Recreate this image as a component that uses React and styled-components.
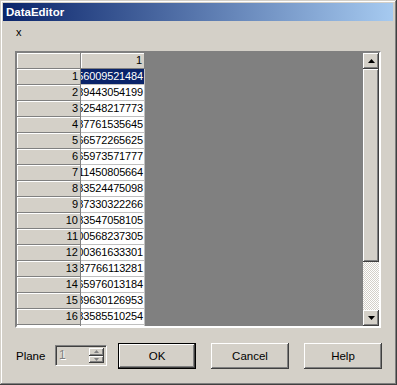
import React from "react";
import styled, { createGlobalStyle } from "styled-components";

const GlobalStyle = createGlobalStyle`
  html, body {
    margin: 0;
    padding: 0;
    background: #d4d0c8;
  }
  body {
    font-family: "Liberation Sans", Arial, sans-serif;
    font-size: 11px;
  }
`;

const raised = `
  box-shadow: inset -1px -1px #404040, inset 1px 1px #ffffff,
    inset -2px -2px #808080, inset 2px 2px #d4d0c8;
`;

const Window = styled.div`
  width: 397px;
  height: 385px;
  box-sizing: border-box;
  padding: 3px 3px 3px 3px;
  background: #d4d0c8;
  box-shadow: inset -1px -1px #404040, inset 1px 1px #d4d0c8,
    inset -2px -2px #808080, inset 2px 2px #ffffff;
  display: flex;
  flex-direction: column;
`;

const TitleBar = styled.div`
  height: 18px;
  margin-right: 1px;
  background: linear-gradient(to right, #0a246a, #a6caf0);
  color: #fff;
  font-weight: bold;
  font-size: 11.5px;
  line-height: 18px;
  padding-left: 3px;
`;

const Body = styled.div`
  padding: 5px 0 0 12px;
  display: flex;
  flex-direction: column;
`;

const VarLabel = styled.div`
  margin-left: 1px;
  height: 13px;
  line-height: 13px;
  color: #000;
`;

const GridBox = styled.div`
  margin-top: 12px;
  width: 366px;
  height: 277px;
  box-sizing: border-box;
  border-style: solid;
  border-width: 2px;
  border-color: #808080 #ffffff #ffffff #808080;
  box-shadow: inset 1px 1px #404040, inset -1px -1px #d4d0c8;
  display: flex;
  overflow: hidden;
`;

const GridArea = styled.div`
  flex: 1;
  background: #808080;
  overflow: hidden;
  display: flex;
  flex-direction: column;
`;

const Row = styled.div`
  display: flex;
  height: 16px;
  flex-shrink: 0;
`;

const HeadCell = styled.div`
  width: 64px;
  height: 16px;
  box-sizing: border-box;
  background: #d4d0c8;
  border-right: 1px solid #808080;
  border-bottom: 1px solid #808080;
  box-shadow: inset 1px 1px #ffffff;
  text-align: right;
  padding-right: 2px;
  line-height: 15px;
  color: #000;
`;

const DataCell = styled.div`
  width: 64px;
  height: 16px;
  box-sizing: border-box;
  background: ${(p) => (p.$selected ? "#0a246a" : "#ffffff")};
  color: ${(p) => (p.$selected ? "#ffffff" : "#000000")};
  border-right: 1px solid #c0c0c0;
  border-bottom: 1px solid #c0c0c0;
  display: flex;
  justify-content: flex-end;
  overflow: hidden;
  white-space: nowrap;
  padding-right: 1px;
  letter-spacing: -0.15px;
  line-height: 15px;
`;

const Scrollbar = styled.div`
  width: 16px;
  display: flex;
  flex-direction: column;
  background: #d4d0c8;
`;

const ScrollButton = styled.div`
  width: 16px;
  height: 16px;
  flex-shrink: 0;
  box-sizing: border-box;
  background: #d4d0c8;
  ${raised}
  display: flex;
  align-items: center;
  justify-content: center;
`;

const Thumb = styled.div`
  height: 193px;
  flex-shrink: 0;
  background: #d4d0c8;
  ${raised}
`;

const Track = styled.div`
  flex: 1;
  background: repeating-conic-gradient(#d4d0c8 0 25%, #ffffff 0 50%) 0 0 / 2px 2px;
`;

const BottomRow = styled.div`
  margin-top: 14px;
  display: flex;
  align-items: center;
  height: 27px;
`;

const PlaneLabel = styled.div`
  margin-left: 1px;
  color: #000;
  width: 39px;
  font-size: 11.5px;
`;

const Spinner = styled.div`
  width: 52px;
  height: 21px;
  box-sizing: border-box;
  border-style: solid;
  border-width: 1px;
  border-color: #808080 #ffffff #ffffff #808080;
  box-shadow: inset 1px 1px #404040, inset -1px -1px #d4d0c8;
  display: flex;
  align-items: stretch;
  padding: 2px 2px 2px 3px;
  margin-right: 11px;
`;

const SpinValue = styled.div`
  flex: 1;
  color: #808080;
  text-shadow: 1px 1px #ffffff;
  font-size: 12px;
  line-height: 15px;
`;

const SpinButtons = styled.div`
  width: 15px;
  display: flex;
  flex-direction: column;
`;

const SpinButton = styled.div`
  flex: 1;
  ${raised}
  display: flex;
  align-items: center;
  justify-content: center;
`;

const Button = styled.div`
  width: 78px;
  height: 26px;
  box-sizing: border-box;
  margin-right: ${(p) => p.$gap || 0}px;
  background: #d4d0c8;
  ${(p) =>
    p.$default
      ? `border: 1px solid #000; box-shadow: inset -1px -1px #404040, inset 1px 1px #ffffff, inset -2px -2px #808080;`
      : `box-shadow: inset -1px -1px #404040, inset 1px 1px #ffffff, inset -2px -2px #808080, inset 2px 2px #d4d0c8;`}
  display: flex;
  align-items: center;
  justify-content: center;
  color: #000;
  font-size: 11.5px;
`;

const Arrow = ({ down, color = "#000", w = 7, h = 4 }) => (
  <svg width={w} height={h} viewBox={`0 0 ${w} ${h}`}>
    <polygon
      points={down ? `0,0 ${w},0 ${w / 2},${h}` : `${w / 2},0 ${w},${h} 0,${h}`}
      fill={color}
    />
  </svg>
);

const values = [
  "0.56009521484",
  "0.39443054199",
  "0.52548217773",
  "0.87761535645",
  "0.66572265625",
  "0.65973571777",
  "0.11450805664",
  "0.83524475098",
  "0.87330322266",
  "0.83547058105",
  "0.00568237305",
  "0.00361633301",
  "0.87766113281",
  "0.65976013184",
  "0.39630126953",
  "0.83585510254",
  "0.41234567890",
];

export default function App() {
  return (
    <Window>
      <GlobalStyle />
      <TitleBar>DataEditor</TitleBar>
      <Body>
        <VarLabel>x</VarLabel>
        <GridBox>
          <GridArea>
            <Row>
              <HeadCell />
              <HeadCell>1</HeadCell>
            </Row>
            {values.map((v, i) => (
              <Row key={i}>
                <HeadCell>{i + 1}</HeadCell>
                <DataCell $selected={i === 0}>{v}</DataCell>
              </Row>
            ))}
          </GridArea>
          <Scrollbar>
            <ScrollButton>
              <Arrow />
            </ScrollButton>
            <Thumb />
            <Track />
            <ScrollButton>
              <Arrow down />
            </ScrollButton>
          </Scrollbar>
        </GridBox>
        <BottomRow>
          <PlaneLabel>Plane</PlaneLabel>
          <Spinner>
            <SpinValue>1</SpinValue>
            <SpinButtons>
              <SpinButton>
                <Arrow color="#808080" w={5} h={3} />
              </SpinButton>
              <SpinButton>
                <Arrow down color="#808080" w={5} h={3} />
              </SpinButton>
            </SpinButtons>
          </Spinner>
          <Button $default $gap={15}>OK</Button>
          <Button $gap={15}>Cancel</Button>
          <Button>Help</Button>
        </BottomRow>
      </Body>
    </Window>
  );
}
